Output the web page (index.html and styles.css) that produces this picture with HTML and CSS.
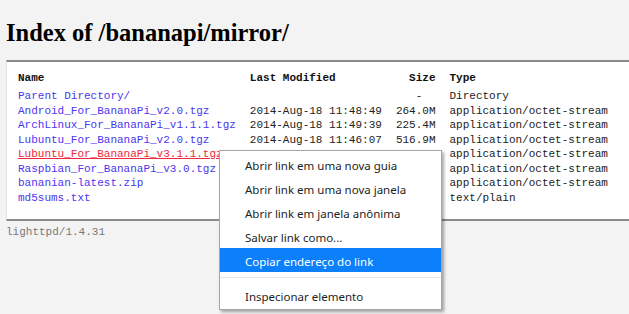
FILE: index.html
```html
<!DOCTYPE html>
<html lang="pt">
<head>
    <meta charset="UTF-8">
    <title>Index of /bananapi/mirror/</title>
    <link rel="stylesheet" href="styles.css">
</head>
<body>
    <h2>Index of /bananapi/mirror/</h2>

    <div class="list">
        <table>
            <thead>
                <tr>
                    <th>Name</th>
                    <th>Last Modified</th>
                    <th class="s">Size</th>
                    <th>Type</th>
                </tr>
            </thead>
            <tbody>
                <tr>
                    <td><a href="#">Parent Directory/</a></td>
                    <td></td>
                    <td class="s">-&nbsp;&nbsp;</td>
                    <td>Directory</td>
                </tr>
                <tr>
                    <td><a href="#">Android_For_BananaPi_v2.0.tgz</a></td>
                    <td>2014-Aug-18 11:48:49</td>
                    <td class="s">264.0M</td>
                    <td>application/octet-stream</td>
                </tr>
                <tr>
                    <td><a href="#">ArchLinux_For_BananaPi_v1.1.1.tgz</a></td>
                    <td>2014-Aug-18 11:49:39</td>
                    <td class="s">225.4M</td>
                    <td>application/octet-stream</td>
                </tr>
                <tr>
                    <td><a href="#">Lubuntu_For_BananaPi_v2.0.tgz</a></td>
                    <td>2014-Aug-18 11:46:07</td>
                    <td class="s">516.9M</td>
                    <td>application/octet-stream</td>
                </tr>
                <tr>
                    <td><a href="#" class="hover">Lubuntu_For_BananaPi_v3.1.1.tgz</a></td>
                    <td>2014-Aug-18 11:44:39</td>
                    <td class="s">822.5M</td>
                    <td>application/octet-stream</td>
                </tr>
                <tr>
                    <td><a href="#">Raspbian_For_BananaPi_v3.0.tgz</a></td>
                    <td>2014-Aug-18 11:52:12</td>
                    <td class="s">489.3M</td>
                    <td>application/octet-stream</td>
                </tr>
                <tr>
                    <td><a href="#">bananian-latest.zip</a></td>
                    <td>2014-Aug-19 09:14:55</td>
                    <td class="s">128.7M</td>
                    <td>application/octet-stream</td>
                </tr>
                <tr>
                    <td><a href="#">md5sums.txt</a></td>
                    <td>2014-Aug-19 09:20:03</td>
                    <td class="s">0.4K</td>
                    <td>text/plain</td>
                </tr>
            </tbody>
        </table>
    </div>

    <div class="foot">lighttpd/1.4.31</div>

    <!-- context menu opened over the hovered link -->
    <ul class="context-menu">
        <li>Abrir link em uma nova guia</li>
        <li>Abrir link em uma nova janela</li>
        <li>Abrir link em janela anônima</li>
        <li>Salvar link como...</li>
        <li class="active">Copiar endereço do link</li>
        <li class="separator"></li>
        <li>Inspecionar elemento</li>
    </ul>
</body>
</html>
```

FILE: styles.css
```css
* {
    box-sizing: border-box;
}

body {
    margin: 0;
    padding: 0 0 0 6px;
    background: #f3f3f3;
    color: #1a1a1a;
    overflow: hidden;
}

h2 {
    font-family: 'Liberation Serif', 'Times New Roman', serif;
    font-size: 24.5px;
    line-height: 30px;
    font-weight: bold;
    margin: 18px 0 12px;
    color: #000;
}

a {
    color: #4a36f0;
    text-decoration: none;
}

a.hover {
    color: #f0283c;
    text-decoration: underline;
}

.list {
    background: #fff;
    border-top: 2px solid #8a8a8a;
    border-bottom: 2px solid #8a8a8a;
    border-left: 1px solid #e2e2e2;
    padding: 9px 0 14px;
}

table {
    margin-left: 11px;
    border-collapse: collapse;
}

th, td {
    font-family: 'Liberation Mono', 'Courier New', monospace;
    font-size: 11px;
    line-height: 14.5px;
    text-align: left;
    padding: 0 14px 0 0;
    white-space: pre;
    color: #222;
}

th {
    font-weight: bold;
    padding-bottom: 3.5px;
    color: #111;
}

td.s, th.s {
    text-align: right;
}

.foot {
    font-family: 'Liberation Mono', 'Courier New', monospace;
    font-size: 11px;
    line-height: 14.5px;
    color: #787878;
    padding-top: 4px;
}

.context-menu {
    position: absolute;
    left: 219px;
    top: 150px;
    width: 223px;
    margin: 0;
    padding: 1px 0 2px;
    list-style: none;
    background: #fff;
    border: 1px solid #a6a6a6;
    box-shadow: 2px 2px 3px rgba(0, 0, 0, 0.35);
    font-family: 'Noto Sans', 'Open Sans', sans-serif;
    font-size: 11.5px;
    color: #1e1e1e;
}

.context-menu li {
    height: 24px;
    line-height: 21px;
    padding: 3px 0 0 25px;
}

.context-menu li.active {
    background: #0c80fa;
    color: #fff;
}

.context-menu li.separator {
    height: 11px;
    padding: 0;
    position: relative;
}

.context-menu li.separator::after {
    content: "";
    position: absolute;
    left: 0;
    right: 0;
    top: 5px;
    border-top: 1px solid #e6e6e6;
}
```
